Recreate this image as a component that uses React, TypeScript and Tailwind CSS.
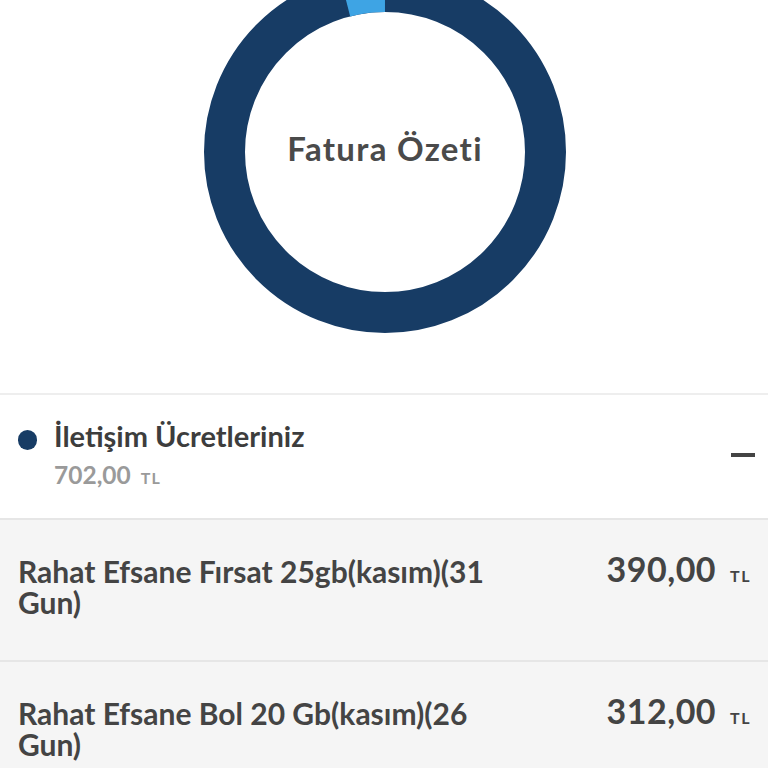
const items = [
  { name: "Rahat Efsane Fırsat 25gb(kasım)(31 Gun)", price: "390,00" },
  { name: "Rahat Efsane Bol 20 Gb(kasım)(26 Gun)", price: "312,00" },
];

function Donut() {
  // ring centre sits at (385,152); the top of it is scrolled off the screen
  const cx = 385;
  const cy = 152;
  const r = 160.5;
  const c = 2 * Math.PI * r;
  const small = c * 0.04;
  return (
    <svg width="768" height="393" viewBox="0 0 768 393" className="block">
      <circle cx={cx} cy={cy} r={r} fill="none" stroke="#173c65" strokeWidth="41" />
      <circle
        cx={cx}
        cy={cy}
        r={r}
        fill="none"
        stroke="#3ea4e4"
        strokeWidth="41"
        strokeDasharray={`${small} ${c - small}`}
        transform={`rotate(-104.4 ${cx} ${cy})`}
      />
    </svg>
  );
}

export default function App() {
  return (
    <div className="w-[768px] h-[768px] overflow-hidden bg-white font-['Lato','Liberation_Sans',sans-serif]">
      <div className="relative h-[393px]">
        <Donut />
        <div className="absolute left-[385px] top-[149px] -translate-x-1/2 -translate-y-1/2 whitespace-nowrap text-[33px] tracking-[1.3px] font-bold text-[#4a4a4a]">
          Fatura Özeti
        </div>
      </div>

      <div className="border-t-2 border-[#eeeeee] h-[125px] flex items-start justify-between pl-[18px] pr-[13px] pt-[25px]">
        <div className="flex items-start gap-[17px]">
          <span className="mt-[10px] w-[19px] h-[20px] rounded-full bg-[#173c65]" />
          <div>
            <div className="text-[29px] leading-[32px] font-bold text-[#3d3d3d]">İletişim Ücretleriniz</div>
            <div className="mt-[9px] flex items-baseline gap-[10px] text-[#9a9a9a] font-bold leading-[28px]">
              <span className="text-[24.5px]">702,00</span>
              <span className="text-[16px] tracking-[1px]">TL</span>
            </div>
          </div>
        </div>
        <span className="mt-[33px] w-[24px] h-[4px] bg-[#444444]" />
      </div>

      {items.map((it) => (
        <div
          key={it.name}
          className="bg-[#f5f5f5] border-t-2 border-[#e6e6e6] h-[142px] flex justify-between pl-[18px] pr-[17px] pt-[36px]"
        >
          <div className="w-[485px] text-[30px] leading-[31px] font-bold text-[#444444]">{it.name}</div>
          <div className="flex items-baseline gap-[14px] text-[#444444] font-bold leading-[34px] -mt-[4px]">
            <span className="text-[34px] tracking-[0.5px]">{it.price}</span>
            <span className="text-[16px] tracking-[1.5px]">TL</span>
          </div>
        </div>
      ))}
    </div>
  );
}
